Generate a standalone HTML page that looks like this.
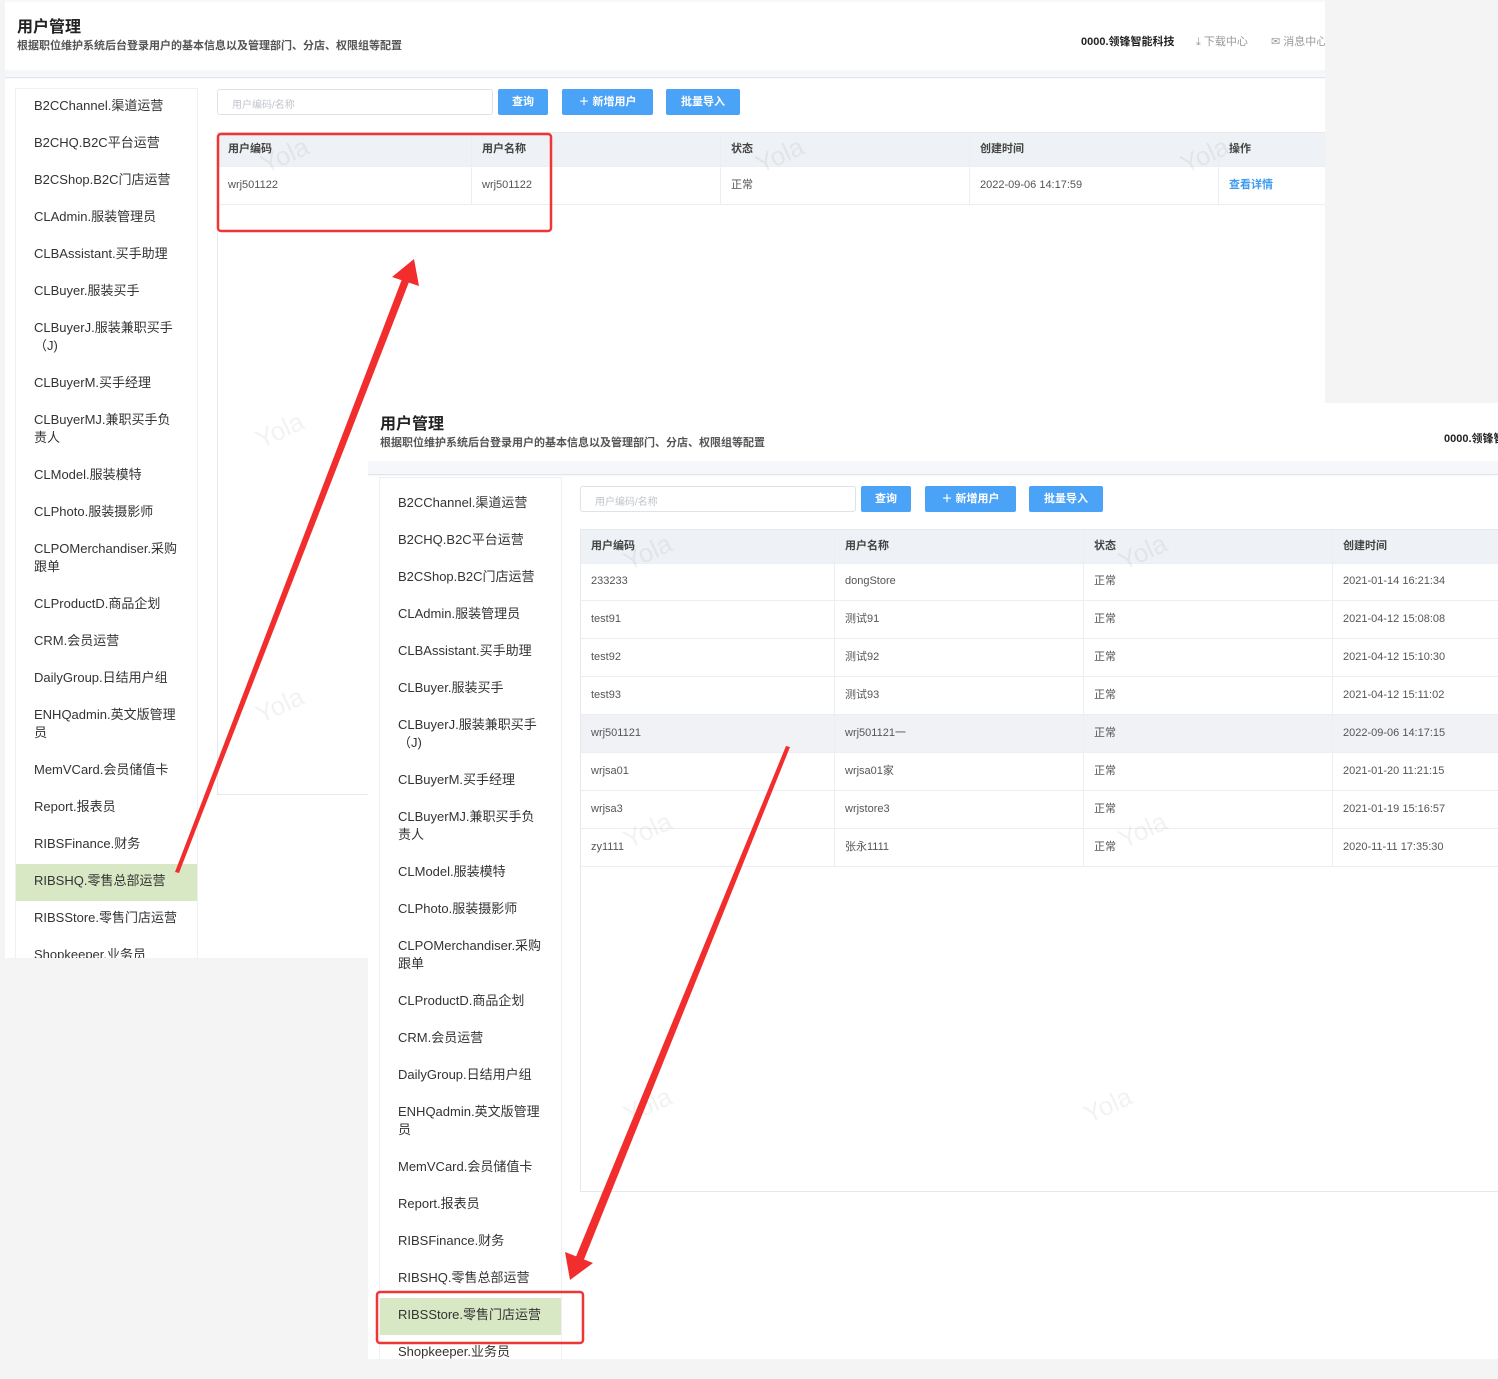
<!DOCTYPE html>
<html><head><meta charset="utf-8"><style>
*{margin:0;padding:0;box-sizing:border-box}
body{width:1498px;height:1379px;background:#f4f4f4;position:relative;overflow:hidden;font-family:"Liberation Sans","Noto Sans CJK SC",sans-serif;color:#333}
.shot{position:absolute;background:#fff;overflow:hidden}
.hdr{position:absolute;left:0;top:2px;right:0;height:68px;background:#fff}
.band{position:absolute;left:0;top:70px;right:0;height:8px;background:#f5f7fa;border-bottom:1px solid #e2e6ec}
.title{position:absolute;left:12px;top:13px;font-size:16px;font-weight:bold;color:#222}
.sub{position:absolute;left:12px;top:37px;font-size:11px;font-weight:bold;color:#555}
.org{position:absolute;left:1076px;top:33px;font-size:11px;font-weight:bold;color:#222;white-space:nowrap}
.lnk{position:absolute;top:33px;font-size:11px;color:#999;white-space:nowrap}
.side{position:absolute;left:10px;top:88px;width:183px;height:900px;border:1px solid #eef0f3;border-bottom:none;background:#fff}
.side div{font-size:13px;line-height:18px;padding:8px 18px 11px 18px;color:#333}
.side div.sel{background:#d8e8c4}
.inp{position:absolute;left:212px;top:89px;width:276px;height:26px;border:1px solid #dfe3e8;border-radius:3px;font-size:10px;color:#c0c4cc;padding:6px 14px}
.btn{position:absolute;top:89px;height:26px;background:#4ba3f7;border-radius:2px;color:#fff;font-size:11px;font-weight:bold;text-align:center;line-height:26px}
.tbl{position:absolute;left:212px;top:132px;width:1200px;height:663px;border:1px solid #e6e8ec;border-right:none}
.row{position:absolute;left:0;height:38px;width:1200px;border-bottom:1px solid #ebeef2}
.row span{position:absolute;top:0;height:100%;padding-left:10px;font-size:11px;color:#555;line-height:36px;border-left:1px solid #ebeef2}
.row.h{height:34px;background:#eef1f5;font-weight:bold}
.row.h span{line-height:32px;font-weight:bold;color:#444}
.c1{left:0;width:253px;border-left:none!important}.c2{left:253px;width:249px}.c3{left:502px;width:249px}.c4{left:751px;width:249px}.c5{left:1000px;width:200px}
.wm{position:absolute;font-size:26px;color:rgba(0,0,0,0.05);transform:rotate(-25deg)}
</style></head><body>

<!-- Screenshot A -->
<div class="shot" style="left:5px;top:0;width:1320px;height:958px;background:#f7f8fa">
 <div class="hdr"></div>
 <div class="title">用户管理</div>
 <div class="sub">根据职位维护系统后台登录用户的基本信息以及管理部门、分店、权限组等配置</div>
 <div class="org">0000.领锋智能科技</div>
 <div class="lnk" style="left:1191px">⤓ 下载中心</div>
 <div class="lnk" style="left:1266px">✉ 消息中心</div>
 <div class="band"></div>
 <div style="position:absolute;left:0;top:79px;right:0;bottom:0;background:#fff"></div>
 <div class="side">
  <div>B2CChannel.渠道运营</div><div>B2CHQ.B2C平台运营</div><div>B2CShop.B2C门店运营</div><div>CLAdmin.服装管理员</div><div>CLBAssistant.买手助理</div><div>CLBuyer.服装买手</div><div>CLBuyerJ.服装兼职买手（J)</div><div>CLBuyerM.买手经理</div><div>CLBuyerMJ.兼职买手负责人</div><div>CLModel.服装模特</div><div>CLPhoto.服装摄影师</div><div>CLPOMerchandiser.采购跟单</div><div>CLProductD.商品企划</div><div>CRM.会员运营</div><div>DailyGroup.日结用户组</div><div>ENHQadmin.英文版管理员</div><div>MemVCard.会员储值卡</div><div>Report.报表员</div><div>RIBSFinance.财务</div><div class="sel">RIBSHQ.零售总部运营</div><div>RIBSStore.零售门店运营</div><div>Shopkeeper.业务员</div>
 </div>
 <div class="inp">用户编码/名称</div>
 <div class="btn" style="left:493px;width:50px">查询</div>
 <div class="btn" style="left:557px;width:91px">＋ 新增用户</div>
 <div class="btn" style="left:661px;width:74px">批量导入</div>
 <div class="tbl">
  <div class="row h" style="top:0"><span class="c1">用户编码</span><span class="c2">用户名称</span><span class="c3">状态</span><span class="c4">创建时间</span><span class="c5">操作</span></div>
  <div class="row" style="top:34px"><span class="c1">wrj501122</span><span class="c2">wrj501122</span><span class="c3">正常</span><span class="c4">2022-09-06 14:17:59</span><span class="c5" style="color:#3d9bf0;font-weight:bold">查看详情</span></div>
 </div>
 <div class="wm" style="left:255px;top:140px">Yola</div>
 <div class="wm" style="left:750px;top:140px">Yola</div>
 <div class="wm" style="left:1175px;top:140px">Yola</div>
 <div class="wm" style="left:250px;top:415px">Yola</div>
 <div class="wm" style="left:250px;top:690px">Yola</div>
</div>

<!-- Screenshot B -->
<div class="shot" style="left:368px;top:403px;width:1130px;height:956px;background:#f7f8fa">
 <div style="position:absolute;left:0;top:-403px;width:1320px;height:1360px">
  <div class="hdr" style="top:397px;height:64px"></div>
  <div class="title" style="top:410px">用户管理</div>
  <div class="sub" style="top:434px">根据职位维护系统后台登录用户的基本信息以及管理部门、分店、权限组等配置</div>
  <div class="org" style="top:430px">0000.领锋智能科技</div>
  <div class="band" style="top:461px;height:14px"></div>
  <div style="position:absolute;left:0;top:476px;right:0;bottom:0;background:#fff"></div>
  <div class="side" style="top:477px;left:11px;padding-top:8px">
   <div>B2CChannel.渠道运营</div><div>B2CHQ.B2C平台运营</div><div>B2CShop.B2C门店运营</div><div>CLAdmin.服装管理员</div><div>CLBAssistant.买手助理</div><div>CLBuyer.服装买手</div><div>CLBuyerJ.服装兼职买手（J)</div><div>CLBuyerM.买手经理</div><div>CLBuyerMJ.兼职买手负责人</div><div>CLModel.服装模特</div><div>CLPhoto.服装摄影师</div><div>CLPOMerchandiser.采购跟单</div><div>CLProductD.商品企划</div><div>CRM.会员运营</div><div>DailyGroup.日结用户组</div><div>ENHQadmin.英文版管理员</div><div>MemVCard.会员储值卡</div><div>Report.报表员</div><div>RIBSFinance.财务</div><div>RIBSHQ.零售总部运营</div><div class="sel">RIBSStore.零售门店运营</div><div>Shopkeeper.业务员</div>
  </div>
  <div class="inp" style="top:486px">用户编码/名称</div>
  <div class="btn" style="left:493px;width:50px;top:486px">查询</div>
  <div class="btn" style="left:557px;width:91px;top:486px">＋ 新增用户</div>
  <div class="btn" style="left:661px;width:74px;top:486px">批量导入</div>
  <div class="tbl" style="top:529px">
   <div class="row h" style="top:0"><span class="c1">用户编码</span><span class="c2">用户名称</span><span class="c3">状态</span><span class="c4">创建时间</span></div>
   <div class="row" style="top:33px"><span class="c1">233233</span><span class="c2">dongStore</span><span class="c3">正常</span><span class="c4">2021-01-14 16:21:34</span></div>
   <div class="row" style="top:71px"><span class="c1">test91</span><span class="c2">测试91</span><span class="c3">正常</span><span class="c4">2021-04-12 15:08:08</span></div>
   <div class="row" style="top:109px"><span class="c1">test92</span><span class="c2">测试92</span><span class="c3">正常</span><span class="c4">2021-04-12 15:10:30</span></div>
   <div class="row" style="top:147px"><span class="c1">test93</span><span class="c2">测试93</span><span class="c3">正常</span><span class="c4">2021-04-12 15:11:02</span></div>
   <div class="row" style="top:185px;background:#f0f2f5"><span class="c1">wrj501121</span><span class="c2">wrj501121一</span><span class="c3">正常</span><span class="c4">2022-09-06 14:17:15</span></div>
   <div class="row" style="top:223px"><span class="c1">wrjsa01</span><span class="c2">wrjsa01家</span><span class="c3">正常</span><span class="c4">2021-01-20 11:21:15</span></div>
   <div class="row" style="top:261px"><span class="c1">wrjsa3</span><span class="c2">wrjstore3</span><span class="c3">正常</span><span class="c4">2021-01-19 15:16:57</span></div>
   <div class="row" style="top:299px"><span class="c1">zy1111</span><span class="c2">张永1111</span><span class="c3">正常</span><span class="c4">2020-11-11 17:35:30</span></div>
  </div>
  <div class="wm" style="left:255px;top:537px">Yola</div>
  <div class="wm" style="left:750px;top:537px">Yola</div>
  <div class="wm" style="left:255px;top:815px">Yola</div>
  <div class="wm" style="left:750px;top:815px">Yola</div>
  <div class="wm" style="left:255px;top:1090px">Yola</div>
  <div class="wm" style="left:715px;top:1090px">Yola</div>
 </div>
</div>

<svg width="1498" height="1379" style="position:absolute;left:0;top:0" xmlns="http://www.w3.org/2000/svg">
 <rect x="218" y="134" width="333" height="97" rx="3" fill="none" stroke="#f03535" stroke-width="2.5"/>
 <rect x="377" y="1292" width="206" height="51" rx="3" fill="none" stroke="#f03535" stroke-width="2.5"/>
 <polygon points="175,872 179,873 409,282 402,279" fill="#f22d2d"/>
 <polygon points="414,259 392,277 419,286" fill="#f22d2d"/>
 <polygon points="786,746 790,747 583,1262 575,1259" fill="#f22d2d"/>
 <polygon points="570,1280 565,1252 593,1263" fill="#f22d2d"/>
</svg>
</body></html>
